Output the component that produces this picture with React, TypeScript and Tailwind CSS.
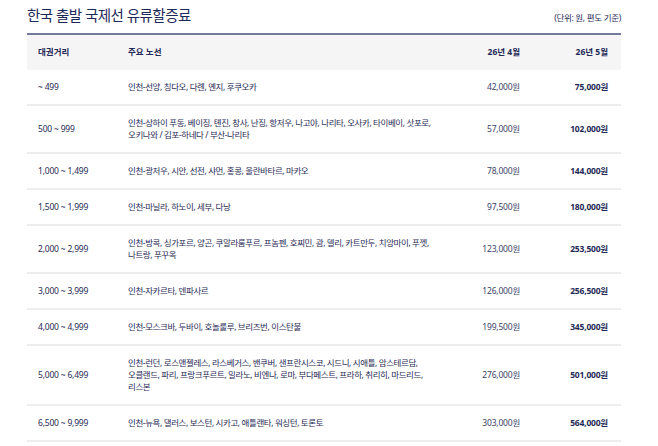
const rows = [
  { range: '~ 499', routes: ['인천-선양, 칭다오, 다롄, 옌지, 후쿠오카'], apr: '42,000원', may: '75,000원' },
  {
    range: '500 ~ 999',
    routes: ['인천-상하이 푸동, 베이징, 톈진, 창사, 난징, 항저우, 나고야, 나리타, 오사카, 타이베이, 삿포로,', '오키나와 / 김포-하네다 / 부산-나리타'],
    apr: '57,000원',
    may: '102,000원',
  },
  { range: '1,000 ~ 1,499', routes: ['인천-광저우, 시안, 선전, 샤먼, 홍콩, 울란바타르, 마카오'], apr: '78,000원', may: '144,000원' },
  { range: '1,500 ~ 1,999', routes: ['인천-마닐라, 하노이, 세부, 다낭'], apr: '97,500원', may: '180,000원' },
  {
    range: '2,000 ~ 2,999',
    routes: ['인천-방콕, 싱가포르, 양곤, 쿠알라룸푸르, 프놈펜, 호찌민, 괌, 델리, 카트만두, 치앙마이, 푸껫,', '나트랑, 푸꾸옥'],
    apr: '123,000원',
    may: '253,500원',
  },
  { range: '3,000 ~ 3,999', routes: ['인천-자카르타, 덴파사르'], apr: '126,000원', may: '256,500원' },
  { range: '4,000 ~ 4,999', routes: ['인천-모스크바, 두바이, 호놀룰루, 브리즈번, 이스탄불'], apr: '199,500원', may: '345,000원' },
  {
    range: '5,000 ~ 6,499',
    routes: [
      '인천-런던, 로스앤젤레스, 라스베거스, 밴쿠버, 샌프란시스코, 시드니, 시애틀, 암스테르담,',
      '오클랜드, 파리, 프랑크푸르트, 밀라노, 비엔나, 로마, 부다페스트, 프라하, 취리히, 마드리드,',
      '리스본',
    ],
    apr: '276,000원',
    may: '501,000원',
  },
  { range: '6,500 ~ 9,999', routes: ['인천-뉴욕, 댈러스, 보스턴, 시카고, 애틀랜타, 워싱턴, 토론토'], apr: '303,000원', may: '564,000원' },
];

export default function App() {
  return (
    <div
      className="w-[658px] h-[446px] overflow-hidden bg-white text-[#1f2a55]"
      style={{ fontFamily: '"Noto Sans", "Noto Sans CJK KR", sans-serif' }}
    >
      <div className="w-[594px] ml-[27px]">
        <div className="flex items-end justify-between h-[33px] pb-[11px]">
          <h1 className="text-[14.5px] leading-none font-normal tracking-[-0.5px] text-[#1c2858]">한국 출발 국제선 유류할증료</h1>
          <span className="text-[8.5px] leading-none tracking-[-0.3px]">(단위: 원, 편도 기준)</span>
        </div>
        <div className="border-t-2 border-[#737a9c]">
          <div className="grid grid-cols-[90px_1fr_90px_88px] bg-[#f5f5f5] h-[35px] items-center text-[8.5px] font-bold">
            <div className="pl-[11px]">대권거리</div>
            <div className="pl-[11px]">주요 노선</div>
            <div className="text-right pr-[13px]">26년 4월</div>
            <div className="text-right pr-[13px]">26년 5월</div>
          </div>
          {rows.map((r) => (
            <div
              key={r.range}
              className="grid grid-cols-[90px_1fr_90px_88px] items-center border-b-2 border-[#eeeeee] py-[11px] text-[8.5px] leading-[12px]"
            >
              <div className="pl-[11px] tracking-[-0.2px]">{r.range}</div>
              <div className="pl-[11px] tracking-[-0.4px]">
                {r.routes.map((l) => (
                  <div key={l} className="whitespace-nowrap">{l}</div>
                ))}
              </div>
              <div className="text-right pr-[13px] text-[#3a4468] tracking-[-0.2px]">{r.apr}</div>
              <div className="text-right pr-[13px] font-bold tracking-[-0.2px]">{r.may}</div>
            </div>
          ))}
        </div>
      </div>
    </div>
  );
}
